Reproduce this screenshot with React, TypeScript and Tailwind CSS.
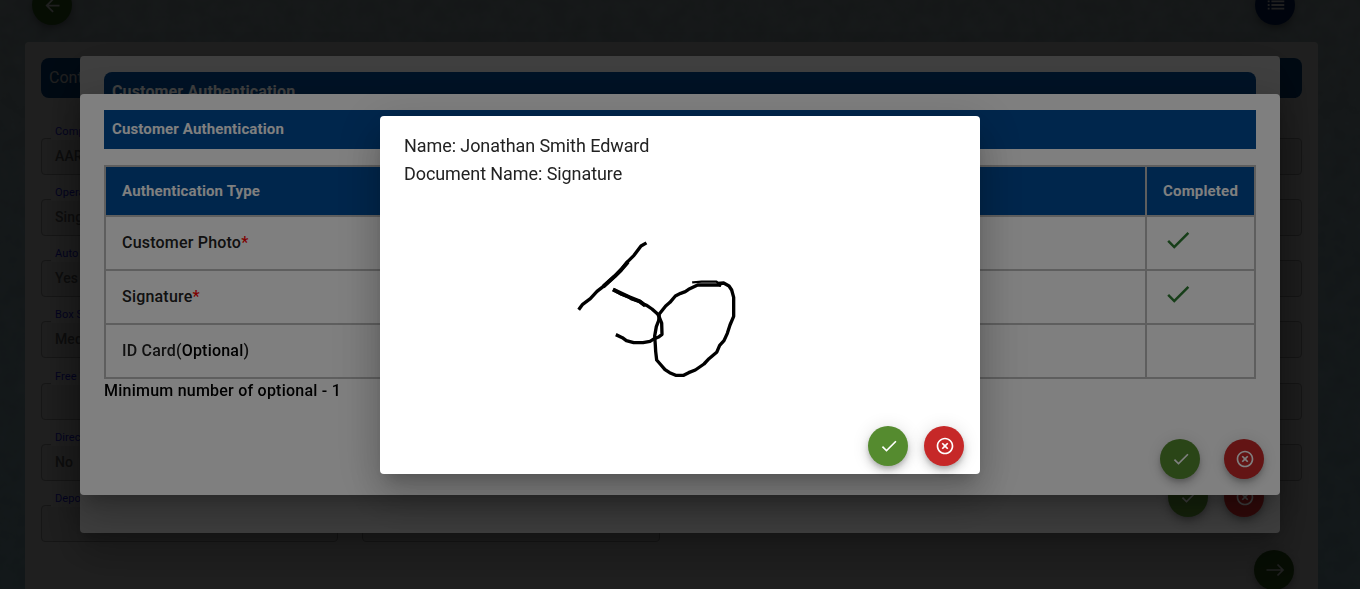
import type { ReactNode } from "react";
import { MdArrowBack, MdCheck, MdHighlightOff, MdList } from "react-icons/md";

const fields = [
  ["Company Name", "AARAV"],
  ["Operation Type", "Single"],
  ["Auto Renewal", "Yes"],
  ["Box Size", "Medium"],
  ["Free Visits", ""],
  ["Direct Debit", "No"],
  ["Deposit", ""],
];

function RoundButton({ className, children }: { className: string; children: ReactNode }) {
  return (
    <button
      className={`flex size-10 shrink-0 items-center justify-center rounded-full pl-px text-white shadow-[0_3px_5px_-1px_rgba(0,0,0,0.2),0_6px_10px_0_rgba(0,0,0,0.14),0_1px_18px_0_rgba(0,0,0,0.12)] ${className}`}
    >
      {children}
    </button>
  );
}

function Overlay({ className, children }: { className: string; children: ReactNode }) {
  return <div className={`fixed inset-0 flex flex-col items-center bg-black/50 ${className}`}>{children}</div>;
}

function Panel({ className, children }: { className: string; children: ReactNode }) {
  return (
    <div
      className={`flex shrink-0 flex-col rounded bg-white shadow-[0_11px_15px_-7px_rgba(0,0,0,0.2),0_24px_38px_3px_rgba(0,0,0,0.14),0_9px_46px_8px_rgba(0,0,0,0.12)] ${className}`}
    >
      {children}
    </div>
  );
}

function Actions({ className }: { className: string }) {
  return (
    <div className={`mt-auto flex justify-end ${className}`}>
      <RoundButton className="bg-[#558b2f]">
        <MdCheck size={20} />
      </RoundButton>
      <RoundButton className="bg-[#c62828]">
        <MdHighlightOff size={20} />
      </RoundButton>
    </div>
  );
}

function Field({ label, value }: { label: string; value: string }) {
  return (
    <div className="h-[61.15px]">
      <div className="relative h-[37px] rounded border border-[#b0b0b0] bg-[#f0f0f0] px-[13px] pt-[7px] text-[14px] leading-5 font-medium tracking-[0.1px] text-[#6a6a6a]">
        {label && (
          <span className="absolute -top-[15px] left-[9px] bg-white px-1 text-[11px] leading-4 font-normal whitespace-nowrap text-[#1a1aff]">
            {label}
          </span>
        )}
        {value}
      </div>
    </div>
  );
}

/* Mottled paper grain behind the page card */
function Grain() {
  return (
    <svg className="absolute inset-0 size-full opacity-50 mix-blend-multiply" aria-hidden="true">
      <filter id="grain">
        <feTurbulence type="fractalNoise" baseFrequency="0.06" numOctaves="4" seed="4" />
        <feColorMatrix values="0.5 0 0 0 0.5  0.5 0 0 0 0.5  0.5 0 0 0 0.5  0 0 0 0 1" />
      </filter>
      <rect width="100%" height="100%" filter="url(#grain)" />
    </svg>
  );
}

function Page() {
  return (
    <div className="relative flex h-[589px] flex-col overflow-hidden bg-[linear-gradient(180deg,#bcd0d5_0%,#acced9_40%,#a0cddc_100%)]">
      <Grain />
      <div className="relative flex h-[42px] shrink-0 items-end justify-between pr-[65px] pb-[17px] pl-8">
        <RoundButton className="bg-[#33691e]">
          <MdArrowBack size={21} />
        </RoundButton>
        <RoundButton className="bg-[#00256b]">
          <MdList size={22} />
        </RoundButton>
      </div>
      <div className="relative mr-[42px] ml-[25px] flex h-[570px] shrink-0 flex-col rounded bg-white px-4 pt-4">
        <div className="flex h-10 shrink-0 items-center rounded-lg bg-[#004c98] px-2 text-[16px] text-white">
          Contract Details
        </div>
        <div className="mt-10 grid h-[404px] shrink-0 grid-cols-4 content-start gap-x-6">
          {[0, 1, 2, 3].map((column) => (
            <div key={column}>
              {fields.slice(0, column < 2 ? 7 : 6).map(([label, value]) => (
                <Field key={label} label={column === 0 ? label : ""} value={column === 0 ? value : ""} />
              ))}
            </div>
          ))}
        </div>
        <div className="mt-2 mr-2 flex justify-end">
          <RoundButton className="bg-[#33691e]">
            <svg width="20" height="20" viewBox="0 0 20 20" fill="none" stroke="currentColor" strokeWidth="1.7">
              <path d="M1.5 10H18M12.5 4.5L18 10L12.5 15.5" />
            </svg>
          </RoundButton>
        </div>
      </div>
    </div>
  );
}

const rows = [
  { name: "Customer Photo", required: true, done: true },
  { name: "Signature", required: true, done: true },
  { name: "ID Card", required: false, done: false },
];

function AuthTable() {
  return (
    <div className="mt-4 grid grid-cols-[1fr_107px] gap-0.5 border-2 border-[#bdbdbd] bg-[#bdbdbd] text-[16px] font-medium tracking-[0.2px] text-[#222]">
      <div className="flex h-[48px] items-center bg-[#004c98] px-4 text-[15px] font-bold tracking-[0.14px] text-white">
        Authentication Type
      </div>
      <div className="flex h-[48px] items-center bg-[#004c98] px-4 text-[15px] font-bold tracking-[0.18px] text-white">
        Completed
      </div>
      {rows.map((row) => (
        <div key={row.name} className="contents">
          <div className="flex h-[52px] items-center bg-white px-4">
            {row.name}
            {row.required ? (
              <span className="text-[#ff0000]">*</span>
            ) : (
              <span>
                (<span className="text-black">Optional</span>)
              </span>
            )}
          </div>
          <div className="h-[52px] bg-white px-4 pt-[8px]">
            {row.done && <MdCheck size={30} className="text-[#2e7d32]" />}
          </div>
        </div>
      ))}
    </div>
  );
}

function Signature() {
  return (
    <svg
      width="190"
      height="160"
      viewBox="0 0 570 480"
      className="ml-[156px] shrink-0"
      fill="none"
      stroke="#000"
      strokeWidth="10"
      strokeLinecap="square"
      strokeLinejoin="round"
    >
      <path d="M59 235L68 223L91 206L111 184L134 166L164 139L183 120L200 98L222 76L243 48L255 41" />
      <path d="M134 166L164 139L183 120L200 100M164 181L183 190L207 201L239 214L251 223" strokeWidth="12" />
      <path d="M164 181L177 188L183 192L207 201L215 207L239 214L251 223L260 226L276 237L293 252L299 264L305 279L306 313L296 321L283 326L270 334L249 338L221 338L199 332L187 323L172 316" />
      <path d="M478 165H413L386 178L376 185L362 190L346 198L330 217L317 228L298 252L296 272L289 290L284 318L286 346L287 364L290 390L303 405L315 419L329 428L347 436H371L386 428L406 420L432 402L447 386L470 367L479 346L492 332L502 310L510 285L521 259V202L515 180L507 168L491 159L478 160" />
      <path d="M400 157L425 155H470L480 166" strokeWidth="7" />
    </svg>
  );
}

export default function App() {
  return (
    <main className="h-[589px] w-[1360px] overflow-hidden font-['Roboto',sans-serif]">
      <Page />
      <Overlay className="pt-14">
        <Panel className="h-[477px] w-[1200px] px-6 pt-4">
          <div className="flex h-10 items-center rounded-t-lg bg-[#004c98] px-2 text-[16px] font-bold tracking-[0.14px] text-white">
            Customer Authentication
          </div>
          <Actions className="-mr-2 gap-4 pb-4" />
        </Panel>
      </Overlay>
      <Overlay className="pt-[94px]">
        <Panel className="h-[401px] w-[1200px] px-6 pt-4">
          <div className="flex h-[39px] items-center bg-[#004c98] px-2 text-[15px] font-bold tracking-[0.14px] text-white">
            Customer Authentication
          </div>
          <AuthTable />
          <p className="text-[16px] leading-6 font-medium tracking-[0.23px] text-black">
            Minimum number of optional - 1
          </p>
          <Actions className="-mr-2 gap-6 pb-4" />
        </Panel>
      </Overlay>
      <Overlay className="pt-[116px]">
        <Panel className="h-[358px] w-[600px] px-6 pt-4">
          <div className="mb-[42px] text-[18px] leading-7 tracking-[-0.08px] text-[#222]">
            <p>Name: Jonathan Smith Edward</p>
            <p>Document Name: Signature</p>
          </div>
          <Signature />
          <Actions className="-mr-2 gap-4 pb-2" />
        </Panel>
      </Overlay>
    </main>
  );
}
